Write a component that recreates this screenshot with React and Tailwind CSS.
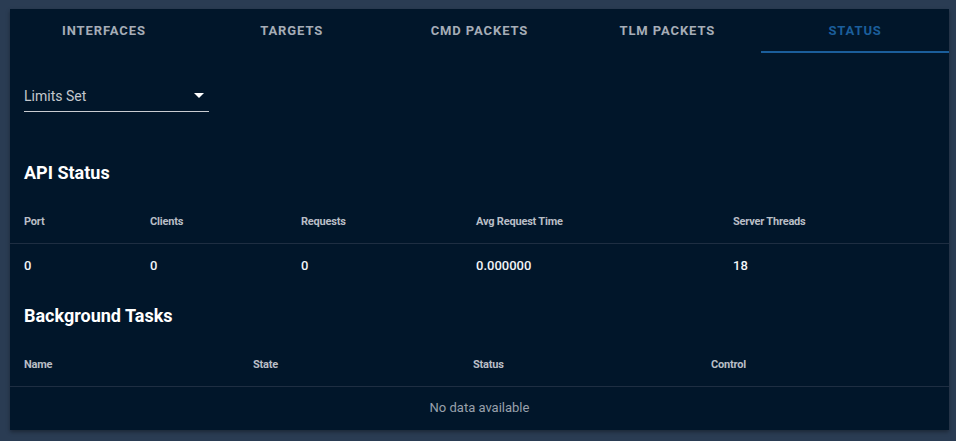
import React from "react";

const tabs = ["Interfaces", "Targets", "Cmd Packets", "Tlm Packets", "Status"];

function Tabs() {
  return (
    <div className="grid grid-cols-5 h-[44px]">
      {tabs.map((t) => {
        const active = t === "Status";
        return (
          <div
            key={t}
            className={
              "flex items-center justify-center uppercase text-[13px] font-bold tracking-[0.9px] " +
              (active
                ? "text-[#1b5e9b] border-b-2 border-[#1b5e9b] pt-[2px]"
                : "text-[#a6adb7]")
            }
          >
            {t}
          </div>
        );
      })}
    </div>
  );
}

function Table({ cols, widths, rows, empty }) {
  return (
    <div>
      <div className={"grid h-[45px] items-center px-[14px] pt-[3px] border-b border-[#1e2e42] " + widths}>
        {cols.map((c) => (
          <div key={c} className="text-[11px] font-bold text-[#b9bec6] tracking-[-0.2px]">
            {c}
          </div>
        ))}
      </div>
      {rows &&
        rows.map((r, i) => (
          <div key={i} className={"grid h-[43px] items-center px-[14px] " + widths}>
            {r.map((v, j) => (
              <div key={j} className="text-[13px] font-medium text-[#f2f4f7]">
                {v}
              </div>
            ))}
          </div>
        ))}
      {empty && (
        <div className="h-[43px] flex items-center justify-center text-[13px] text-[#99a1ac] pb-[2px]">
          {empty}
        </div>
      )}
    </div>
  );
}

export default function App() {
  return (
    <div
      className="w-[956px] h-[441px] bg-[#2a3c53] pt-[9px] pl-[10px] pr-[7px] overflow-hidden"
      style={{ fontFamily: "Roboto, 'Liberation Sans', sans-serif" }}
    >
      <div className="h-[421px] bg-[#01162a] shadow-[0_2px_4px_rgba(0,0,0,0.35)]">
        <Tabs />

        <div className="px-[14px]">
          <div className="mt-[29px] w-[185px] h-[30px] border-b border-[#c9ccd1] flex items-center justify-between pb-[1px]">
            <span className="text-[14px] text-[#c4c8ce]">Limits Set</span>
            <svg width="24" height="24" viewBox="0 0 24 24" className="-mr-[2px] -mt-[2px]">
              <path d="M7 10l5 5 5-5z" fill="#ffffff" />
            </svg>
          </div>

          <h2 className="mt-[49px] h-[24px] leading-[24px] text-[18px] font-bold text-white">
            API Status
          </h2>
        </div>

        <div className="mt-[14px]">
          <Table
            cols={["Port", "Clients", "Requests", "Avg Request Time", "Server Threads"]}
            widths="grid-cols-[126px_151px_175px_257px_1fr]"
            rows={[["0", "0", "0", "0.000000", "18"]]}
          />
        </div>

        <div className="px-[14px]">
          <h2 className="mt-[17px] h-[24px] leading-[24px] text-[18px] font-bold text-white">
            Background Tasks
          </h2>
        </div>

        <div className="mt-[14px]">
          <Table
            cols={["Name", "State", "Status", "Control"]}
            widths="grid-cols-[229px_220px_238px_1fr]"
            empty="No data available"
          />
        </div>
      </div>
    </div>
  );
}
